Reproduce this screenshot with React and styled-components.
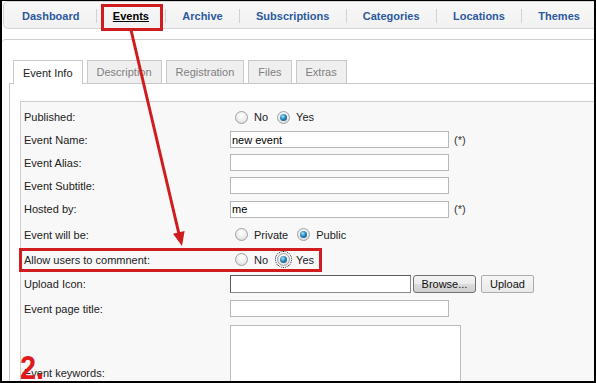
import React from 'react';
import styled, { createGlobalStyle, css } from 'styled-components';

const Global = createGlobalStyle`
  html, body { margin: 0; padding: 0; background: #fff; }
  body { font-family: "Liberation Sans", Arial, sans-serif; }
  * { box-sizing: border-box; }
`;

const Frame = styled.div`
  position: relative;
  width: 596px;
  height: 383px;
  border-style: solid;
  border-color: #000;
  border-width: 1px 2px 2px 2px;
  overflow: hidden;
  background: #fff;
`;

const Nav = styled.nav`
  display: flex;
  align-items: center;
  height: 28px;
  padding-top: 1px;
  margin: 0 -12px 0 1px;
  background: linear-gradient(#f8f8f8, #f1f1f1);
  border: 1px solid #d4d4d4;
  border-radius: 5px;
`;

const NavItem = styled.a`
  padding: 0 16.2px;
  font-size: 11px;
  font-weight: bold;
  color: ${p => (p.$active ? '#000' : '#2c5a9e')};
  text-decoration: ${p => (p.$active ? 'underline' : 'none')};
  &:first-child { padding-left: 18px; }
`;

const Sep = styled.span`
  width: 1px;
  height: 14px;
  background: #d2d2d2;
`;

const Content = styled.div`
  margin-top: 10px;
  border-top: 1px solid #cfcfcf;
  border-top-left-radius: 4px;
  padding: 20px 0 0 7px;
`;

const Tabs = styled.div`
  display: flex;
  align-items: flex-end;
  gap: 4px;
  margin-left: 4px;
`;

const Tab = styled.div`
  position: relative;
  height: 23px;
  padding: 0 9px;
  display: flex;
  align-items: center;
  font-size: 11px;
  color: #808080;
  background: #efefef;
  border: 1px solid #c9c9c9;
  border-bottom: none;
  ${p => p.$active && css`
    height: 24px;
    margin-bottom: -1px;
    background: #fff;
    color: #222;
    z-index: 1;
  `}
`;

const Panel = styled.div`
  border: 1px solid #c9c9c9;
  background: #fff;
  padding: 17px 10px 0 10px;
  margin-right: -40px;
`;

const Fieldset = styled.div`
  border: 1px solid #cfcfcf;
  background: #f8f8f8;
  padding: 4px 0 0 3px;
`;

const Row = styled.div`
  display: grid;
  grid-template-columns: 206px auto;
  align-items: center;
  height: ${p => (p.$h ? `${p.$h}px` : 'auto')};
  padding-top: ${p => p.$pt || 0}px;
`;

const Label = styled.div`
  font-size: 11px;
  color: #222;
`;

const Field = styled.div`
  display: flex;
  align-items: center;
`;

const TextBox = styled.input`
  width: 219px;
  height: 17px;
  border: 1px solid #b8b8b8;
  background: #fff;
  font-family: "Liberation Sans", Arial, sans-serif;
  font-size: 11px;
  color: #000;
  padding: 0 1px;
  outline: none;
`;

const Req = styled.span`
  margin-left: 5px;
  font-size: 11px;
  color: #333;
`;

const RadioGroup = styled.div`
  display: flex;
  align-items: center;
  gap: 9px;
  padding-left: 5px;
`;

const Option = styled.label`
  display: inline-flex;
  align-items: center;
  gap: 6px;
  font-size: 11px;
  color: #222;
`;

const Radio = styled.span`
  position: relative;
  display: inline-block;
  width: 13px;
  height: 13px;
  border-radius: 50%;
  border: 1px solid #a2a2a2;
  background: radial-gradient(circle at 50% 35%, #ffffff 0%, #ececec 55%, #cdcdcd 100%);
  ${p => p.$checked && css`
    &::after {
      content: '';
      position: absolute;
      left: 2px;
      top: 2px;
      width: 7px;
      height: 7px;
      border-radius: 50%;
      background: radial-gradient(circle at 40% 35%, #a8e4f7 0%, #2a88bb 45%, #0c3c66 100%);
    }
  `}
  ${p => p.$focus && css`
    outline: 1px dotted #222;
    outline-offset: 1px;
  `}
`;

const FileBox = styled.div`
  width: 181px;
  height: 18px;
  background: #fff;
  border: 1px solid #8a8a8a;
  border-top-color: #5a5a5a;
  border-left-color: #5a5a5a;
`;

const Button = styled.button`
  height: 18px;
  padding: 0;
  width: ${p => p.$w}px;
  margin-left: ${p => p.$ml}px;
  font-family: "Liberation Sans", Arial, sans-serif;
  font-size: 11px;
  color: #111;
  border: 1px solid ${p => (p.$strong ? '#707070' : '#acacac')};
  border-radius: ${p => (p.$strong ? 3 : 2)}px;
  background: ${p => (p.$strong
    ? 'linear-gradient(#f4f4f4 0%, #ebebeb 50%, #dcdcdc 51%, #cfcfcf 100%)'
    : 'linear-gradient(#f6f6f6, #e9e9e9)')};
`;

const TextArea = styled.textarea`
  width: 231px;
  height: 96px;
  border: 1px solid #bdbdbd;
  background: #fff;
  resize: none;
  outline: none;
`;

const Overlay = styled.svg`
  position: absolute;
  top: -1px;
  left: -2px;
  width: 596px;
  height: 383px;
  pointer-events: none;
  z-index: 5;
`;

const StepMark = styled.div`
  position: absolute;
  left: 18px;
  top: 349px;
  font-size: 34px;
  line-height: 1;
  font-weight: bold;
  color: #e0191b;
  transform: scaleX(0.85);
  transform-origin: left top;
  z-index: 6;
`;

const navItems = ['Dashboard', 'Events', 'Archive', 'Subscriptions', 'Categories', 'Locations', 'Themes'];
const tabs = ['Event Info', 'Description', 'Registration', 'Files', 'Extras'];

function RadioPair({ a, b, checked, focus }) {
  return (
    <RadioGroup>
      <Option><Radio $checked={checked === 0} />{a}</Option>
      <Option><Radio $checked={checked === 1} $focus={focus} />{b}</Option>
    </RadioGroup>
  );
}

export default function App() {
  return (
    <>
      <Global />
      <Frame>
        <Nav>
          {navItems.map((n, i) => (
            <React.Fragment key={n}>
              {i > 0 && <Sep />}
              <NavItem $active={n === 'Events'}>{n}</NavItem>
            </React.Fragment>
          ))}
        </Nav>
        <Content>
          <Tabs>
            {tabs.map((t, i) => (
              <Tab key={t} $active={i === 0}>{t}</Tab>
            ))}
          </Tabs>
          <Panel>
            <Fieldset>
              <Row $h={22}>
                <Label>Published:</Label>
                <RadioPair a="No" b="Yes" checked={1} />
              </Row>
              <Row $h={23}>
                <Label>Event Name:</Label>
                <Field><TextBox value="new event" readOnly /><Req>(*)</Req></Field>
              </Row>
              <Row $h={23}>
                <Label>Event Alias:</Label>
                <Field><TextBox readOnly /></Field>
              </Row>
              <Row $h={23}>
                <Label>Event Subtitle:</Label>
                <Field><TextBox readOnly /></Field>
              </Row>
              <Row $h={24}>
                <Label>Hosted by:</Label>
                <Field><TextBox value="me" readOnly /><Req>(*)</Req></Field>
              </Row>
              <Row $h={27}>
                <Label>Event will be:</Label>
                <RadioPair a="Private" b="Public" checked={1} />
              </Row>
              <Row $h={23}>
                <Label>Allow users to commnent:</Label>
                <RadioPair a="No" b="Yes" checked={1} focus />
              </Row>
              <Row $h={25}>
                <Label>Upload Icon:</Label>
                <Field>
                  <FileBox />
                  <Button $w={63} $ml={2} $strong>Browse...</Button>
                  <Button $w={53} $ml={5}>Upload</Button>
                </Field>
              </Row>
              <Row $h={25}>
                <Label>Event page title:</Label>
                <Field><TextBox readOnly /></Field>
              </Row>
              <Row $pt={4}>
                <Label>Event keywords:</Label>
                <Field><TextArea readOnly /></Field>
              </Row>
            </Fieldset>
          </Panel>
        </Content>
        <Overlay viewBox="0 0 596 383">
          <rect x="102.5" y="5.5" width="59" height="24" fill="none" stroke="#d01c1f" strokeWidth="3" />
          <rect x="20.5" y="249.5" width="300" height="21" fill="none" stroke="#d01c1f" strokeWidth="3" />
          <line x1="131" y1="30" x2="179" y2="234" stroke="#d01c1f" strokeWidth="3" />
          <polygon points="182,246 184.6,231 173,233.8" fill="#d01c1f" />
        </Overlay>
        <StepMark>2.</StepMark>
      </Frame>
    </>
  );
}
